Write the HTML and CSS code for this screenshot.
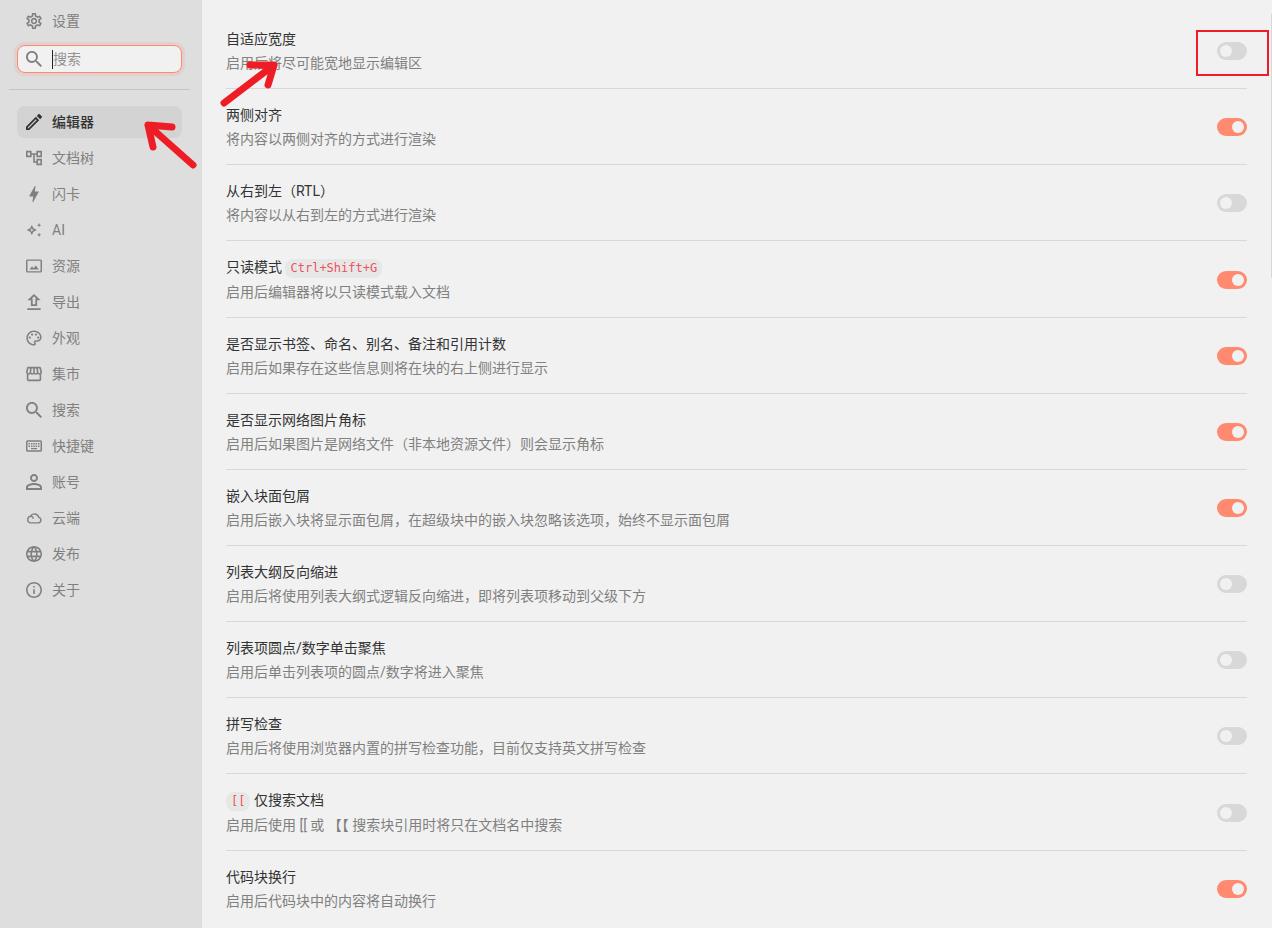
FILE: index.html
```html
<!DOCTYPE html>
<html lang="zh-CN">
<head>
    <meta charset="UTF-8">
    <meta name="viewport" content="width=device-width, initial-scale=1.0">
    <title>设置</title>
    <link rel="stylesheet" href="styles.css">
</head>
<body>
    <aside class="sidebar">
        <h1 class="title">
            <svg class="icon" viewBox="2 2 20 20"><path d="M19.43 12.98c.04-.32.07-.64.07-.98s-.03-.66-.07-.98l2.11-1.65c.19-.15.24-.42.12-.64l-2-3.46c-.09-.16-.26-.25-.44-.25-.06 0-.12.01-.17.03l-2.49 1c-.52-.4-1.08-.73-1.69-.98l-.38-2.65C14.46 2.18 14.25 2 14 2h-4c-.25 0-.46.18-.49.42l-.38 2.65c-.61.25-1.17.59-1.69.98l-2.49-1c-.06-.02-.12-.03-.18-.03-.17 0-.34.09-.43.25l-2 3.46c-.13.22-.07.49.12.64l2.11 1.65c-.04.32-.07.65-.07.98s.03.66.07.98l-2.11 1.65c-.19.15-.24.42-.12.64l2 3.46c.09.16.26.25.44.25.06 0 .12-.01.17-.03l2.49-1c.52.4 1.08.73 1.69.98l.38 2.65c.03.24.24.42.49.42h4c.25 0 .46-.18.49-.42l.38-2.65c.61-.25 1.17-.59 1.69-.98l2.49 1c.06.02.12.03.18.03.17 0 .34-.09.43-.25l2-3.46c.12-.22.07-.49-.12-.64l-2.11-1.65zm-1.98-1.71c.04.31.05.52.05.73s-.02.43-.05.73l-.14 1.13.89.7 1.08.84-.7 1.21-1.27-.51-1.04-.42-.9.68c-.43.32-.84.56-1.25.73l-1.06.43-.16 1.13-.2 1.35h-1.4l-.19-1.35-.16-1.13-1.06-.43c-.43-.18-.83-.41-1.23-.71l-.91-.7-1.06.43-1.27.51-.7-1.21 1.08-.84.89-.7-.14-1.13c-.03-.31-.05-.54-.05-.74s.02-.43.05-.73l.14-1.13-.89-.7-1.08-.84.7-1.21 1.27.51 1.04.42.9-.68c.43-.32.84-.56 1.25-.73l1.06-.43.16-1.13.2-1.35h1.39l.19 1.35.16 1.13 1.06.43c.43.18.83.41 1.23.71l.91.7 1.06-.43 1.27-.51.7 1.21-1.07.85-.89.7.14 1.13zM12 8c-2.21 0-4 1.79-4 4s1.79 4 4 4 4-1.79 4-4-1.79-4-4-4zm0 6c-1.1 0-2-.9-2-2s.9-2 2-2 2 .9 2 2-.9 2-2 2z"/></svg>
            设置
        </h1>
        <label class="search">
            <svg class="icon" viewBox="3 3 17.5 17.5"><path d="M15.5 14h-.79l-.28-.27C15.41 12.59 16 11.11 16 9.5 16 5.91 13.09 3 9.5 3S3 5.91 3 9.5 5.91 16 9.5 16c1.61 0 3.09-.59 4.23-1.57l.27.28v.79l5 4.99L20.49 19l-4.99-5zm-6 0C7.01 14 5 11.99 5 9.5S7.01 5 9.5 5 14 7.01 14 9.5 11.99 14 9.5 14z"/></svg>
            <input type="text" placeholder="搜索" aria-label="搜索">
        </label>
        <hr class="divider">
        <nav class="menu">
            <button class="item active">
                <svg class="icon" viewBox="3 3 18 18"><path d="M14.06 9.02l.92.92L5.92 19H5v-.92l9.06-9.06M17.66 3c-.25 0-.51.1-.7.29l-1.83 1.83 3.75 3.75 1.83-1.83c.39-.39.39-1.02 0-1.41l-2.34-2.34c-.2-.2-.45-.29-.71-.29zm-3.6 3.19L3 17.25V21h3.75L17.81 9.94l-3.75-3.75z"/></svg>
                编辑器
            </button>
            <button class="item">
                <svg class="icon" viewBox="2 2 20 20"><path d="M22 11V3h-7v3H9V3H2v8h7V8h2v10h4v3h7v-8h-7v3h-2V8h2v3h7zM7 9H4V5h3v4zm10 6h3v4h-3v-4zm0-10h3v4h-3V5z"/></svg>
                文档树
            </button>
            <button class="item">
                <svg class="icon" viewBox="2 2 20 20"><path d="M11 22h-1l1-7H7c-1.200 0-1-.6-.6-1.200L13 2h1l-1 7h4c.9 0 .8.600.5 1.200z"/></svg>
                闪卡
            </button>
            <button class="item">
                <svg class="icon" viewBox="1 1 22 22"><path d="M19 8.300l.9-2.100L22 5.300l-2.100-.9L19 2.300l-.9 2.100-2.100.9 2.100.9zM19 15.700l-.9 2.100-2.100.9 2.100.9.9 2.100.9-2.100 2.100-.9-2.100-.9zM11.300 9.700L9 5 6.700 9.700 2 12l4.700 2.300L9 19l2.300-4.700L16 12zm-1.500 3.100L9 14.700l-.8-1.900L6.300 12l1.900-.8.8-1.900.8 1.900 1.900.8z"/></svg>
                AI
            </button>
            <button class="item">
                <svg class="icon" viewBox="0 0 16 16"><path d="M1.500 1.500h13A1.500 1.500 0 0 1 16 3v10a1.500 1.500 0 0 1-1.500 1.500h-13A1.500 1.500 0 0 1 0 13V3a1.500 1.500 0 0 1 1.500-1.500zm0 1.300v10.400h13V2.800zM3.500 11.500l2.500-3.300 1.600 2L9.800 7.400l3 4.100z"/></svg>
                资源
            </button>
            <button class="item">
                <svg class="icon" viewBox="2.500 3 18 18"><path d="M11.500 3L4 10h4v6.500h7V10h4zM10 14.500V8h-1l2.500-2.300L14 8h-1v6.500zM4 19h15v2H4z"/></svg>
                导出
            </button>
            <button class="item">
                <svg class="icon" viewBox="1.500 1.500 21 21"><path d="M12 22C6.490 22 2 17.510 2 12S6.490 2 12 2s10 4.040 10 9c0 3.310-2.690 6-6 6h-1.770c-.28 0-.5.22-.5.5 0 .12.05.23.13.33.41.47.64 1.060.64 1.670A2.500 2.500 0 0 1 12 22zm0-18c-4.410 0-8 3.590-8 8s3.590 8 8 8c.28 0 .5-.22.5-.5a.54.54 0 0 0-.14-.35c-.41-.46-.63-1.050-.63-1.650a2.500 2.500 0 0 1 2.500-2.500H16c2.210 0 4-1.790 4-4 0-3.860-3.590-7-8-7z"/><circle cx="6.500" cy="11.500" r="1.500"/><circle cx="9.500" cy="7.500" r="1.500"/><circle cx="14.500" cy="7.500" r="1.500"/><circle cx="17.500" cy="11.500" r="1.500"/></svg>
                外观
            </button>
            <button class="item">
                <svg class="icon" viewBox="2 2 20 20"><path d="M21.900 8.890l-1.050-4.370c-.22-.9-1-1.520-1.910-1.520H5.050c-.9 0-1.690.63-1.900 1.520L2.100 8.890c-.24 1.020-.02 2.060.62 2.880.08.11.19.19.28.29V19c0 1.100.9 2 2 2h14c1.100 0 2-.9 2-2v-6.940c.09-.09.2-.18.28-.28.64-.82.87-1.870.62-2.890zM18.910 4.990l1.050 4.370c.1.42.01.84-.25 1.170-.14.18-.44.47-.94.47-.61 0-1.140-.49-1.210-1.140L16.980 5l1.930-.01zM13 5h1.960l.54 4.520c.05.39-.07.78-.33 1.070-.22.26-.54.41-.95.41-.67 0-1.220-.59-1.220-1.310V5zM8.490 9.520L9.040 5H11v4.690c0 .72-.55 1.310-1.290 1.310-.34 0-.65-.15-.89-.41a1.420 1.420 0 0 1-.33-1.070zm-4.450-.16L5.050 5h1.970l-.58 4.860c-.08.65-.6 1.140-1.210 1.140-.49 0-.8-.29-.93-.47-.27-.32-.36-.75-.26-1.170zM5 19v-6.030c.08.01.15.03.23.03.87 0 1.660-.36 2.240-.95.6.6 1.400.95 2.310.95.87 0 1.650-.36 2.230-.93.59.57 1.390.93 2.290.93.84 0 1.640-.35 2.240-.95.58.59 1.370.95 2.240.95.08 0 .15-.02.23-.03V19H5z"/></svg>
                集市
            </button>
            <button class="item">
                <svg class="icon" viewBox="3 3 17.5 17.5"><path d="M15.5 14h-.79l-.28-.27C15.41 12.59 16 11.11 16 9.5 16 5.91 13.09 3 9.5 3S3 5.91 3 9.5 5.91 16 9.5 16c1.61 0 3.09-.59 4.23-1.57l.27.28v.79l5 4.99L20.49 19l-4.99-5zm-6 0C7.01 14 5 11.99 5 9.5S7.01 5 9.5 5 14 7.01 14 9.5 11.99 14 9.5 14z"/></svg>
                搜索
            </button>
            <button class="item">
                <svg class="icon" viewBox="0 0 16 16"><path d="M1.500 2.300h13A1.500 1.500 0 0 1 16 3.800v8.400a1.500 1.500 0 0 1-1.500 1.500h-13A1.500 1.500 0 0 1 0 12.200V3.800a1.500 1.500 0 0 1 1.500-1.500zm0 1.400v8.600h13V3.700zM2.500 5H4v1.500H2.500zM5 5h1.500v1.500H5zM7.300 5h1.500v1.500H7.300zM9.600 5h1.500v1.500H9.600zM12 5h1.500v1.500H12zM2.500 7.500H4V9H2.500zM5 7.500h1.500V9H5zM7.300 7.500h1.500V9H7.300zM9.600 7.500h1.500V9H9.600zM12 7.500h1.500V9H12zM5 10h6v1.300H5z"/></svg>
                快捷键
            </button>
            <button class="item">
                <svg class="icon" viewBox="4 4 16 16"><path d="M12 5.900a2.100 2.100 0 1 1 0 4.200 2.100 2.100 0 0 1 0-4.200m0 9c2.970 0 6.100 1.460 6.100 2.100v1.100H5.900V17c0-.64 3.130-2.100 6.100-2.100M12 4C9.790 4 8 5.790 8 8s1.790 4 4 4 4-1.790 4-4-1.790-4-4-4zm0 9c-2.670 0-8 1.340-8 4v3h16v-3c0-2.660-5.330-4-8-4z"/></svg>
                账号
            </button>
            <button class="item">
                <svg class="icon" viewBox="0 0 16 16"><path class="line" d="M4 12.900h8.500a2.800 2.800 0 0 0 .3-5.500A4.500 4.500 0 0 0 4.500 6.200a3.500 3.500 0 0 0-.5 6.700zM4.500 6.200a2.300 2.300 0 0 1 2.600 2.500"/></svg>
                云端
            </button>
            <button class="item">
                <svg class="icon" viewBox="2 2 20 20"><path d="M11.990 2C6.470 2 2 6.480 2 12s4.470 10 9.990 10C17.520 22 22 17.520 22 12S17.520 2 11.990 2zm6.930 6h-2.950a15.650 15.650 0 0 0-1.380-3.560A8.030 8.030 0 0 1 18.920 8zM12 4.040c.83 1.200 1.480 2.530 1.910 3.960h-3.820c.43-1.430 1.080-2.760 1.910-3.960zM4.260 14C4.100 13.360 4 12.690 4 12s.1-1.360.26-2h3.380c-.08.66-.14 1.320-.14 2s.06 1.340.14 2H4.260zm.82 2h2.950c.32 1.250.78 2.450 1.380 3.560A7.990 7.990 0 0 1 5.080 16zm2.950-8H5.080a7.990 7.990 0 0 1 4.330-3.560A15.650 15.650 0 0 0 8.030 8zM12 19.960c-.83-1.200-1.480-2.530-1.910-3.960h3.820c-.43 1.430-1.080 2.760-1.910 3.960zM14.340 14H9.660c-.09-.66-.16-1.320-.16-2s.07-1.350.16-2h4.680c.09.65.16 1.320.16 2s-.07 1.340-.16 2zm.25 5.560c.6-1.110 1.060-2.310 1.380-3.560h2.950a8.030 8.030 0 0 1-4.330 3.560zM16.360 14c.08-.66.14-1.320.14-2s-.06-1.340-.14-2h3.380c.16.64.26 1.310.26 2s-.1 1.360-.26 2h-3.380z"/></svg>
                发布
            </button>
            <button class="item">
                <svg class="icon" viewBox="2 2 20 20"><path d="M11 7h2v2h-2zm0 4h2v6h-2zm1-9C6.480 2 2 6.480 2 12s4.480 10 10 10 10-4.480 10-10S17.520 2 12 2zm0 18c-4.410 0-8-3.590-8-8s3.590-8 8-8 8 3.590 8 8-3.590 8-8 8z"/></svg>
                关于
            </button>
        </nav>
    </aside>
    <main class="content">
        <label class="row">
            <span class="text">
                <span class="name">自适应宽度</span>
                <span class="desc">启用后将尽可能宽地显示编辑区</span>
            </span>
            <input class="switch" type="checkbox">
        </label>
        <label class="row">
            <span class="text">
                <span class="name">两侧对齐</span>
                <span class="desc">将内容以两侧对齐的方式进行渲染</span>
            </span>
            <input class="switch" type="checkbox" checked>
        </label>
        <label class="row">
            <span class="text">
                <span class="name">从右到左（RTL）</span>
                <span class="desc">将内容以从右到左的方式进行渲染</span>
            </span>
            <input class="switch" type="checkbox">
        </label>
        <label class="row">
            <span class="text">
                <span class="name">只读模式 <code>Ctrl+Shift+G</code></span>
                <span class="desc">启用后编辑器将以只读模式载入文档</span>
            </span>
            <input class="switch" type="checkbox" checked>
        </label>
        <label class="row">
            <span class="text">
                <span class="name">是否显示书签、命名、别名、备注和引用计数</span>
                <span class="desc">启用后如果存在这些信息则将在块的右上侧进行显示</span>
            </span>
            <input class="switch" type="checkbox" checked>
        </label>
        <label class="row">
            <span class="text">
                <span class="name">是否显示网络图片角标</span>
                <span class="desc">启用后如果图片是网络文件（非本地资源文件）则会显示角标</span>
            </span>
            <input class="switch" type="checkbox" checked>
        </label>
        <label class="row">
            <span class="text">
                <span class="name">嵌入块面包屑</span>
                <span class="desc">启用后嵌入块将显示面包屑，在超级块中的嵌入块忽略该选项，始终不显示面包屑</span>
            </span>
            <input class="switch" type="checkbox" checked>
        </label>
        <label class="row">
            <span class="text">
                <span class="name">列表大纲反向缩进</span>
                <span class="desc">启用后将使用列表大纲式逻辑反向缩进，即将列表项移动到父级下方</span>
            </span>
            <input class="switch" type="checkbox">
        </label>
        <label class="row">
            <span class="text">
                <span class="name">列表项圆点/数字单击聚焦</span>
                <span class="desc">启用后单击列表项的圆点/数字将进入聚焦</span>
            </span>
            <input class="switch" type="checkbox">
        </label>
        <label class="row">
            <span class="text">
                <span class="name">拼写检查</span>
                <span class="desc">启用后将使用浏览器内置的拼写检查功能，目前仅支持英文拼写检查</span>
            </span>
            <input class="switch" type="checkbox">
        </label>
        <label class="row">
            <span class="text">
                <span class="name"><code>[[</code> 仅搜索文档</span>
                <span class="desc">启用后使用 [[ 或 【【 搜索块引用时将只在文档名中搜索</span>
            </span>
            <input class="switch" type="checkbox">
        </label>
        <label class="row">
            <span class="text">
                <span class="name">代码块换行</span>
                <span class="desc">启用后代码块中的内容将自动换行</span>
            </span>
            <input class="switch" type="checkbox" checked>
        </label>
        <div class="scrollbar"></div>
    </main>
    <!-- red marks over the page -->
    <svg class="arrow arrow-menu" viewBox="0 0 54 50"><path d="M50 45L5 5l24 2M5 5l5 22"/></svg>
    <svg class="arrow arrow-row" viewBox="0 0 62 50"><path d="M5 44L55 6H31M55 6l-6 20"/></svg>
    <div class="frame"></div>
</body>
</html>
```
FILE: styles.css
```css
* {
    box-sizing: border-box;
}
body {
    margin: 0;
    display: flex;
    height: 100vh;
    overflow: hidden;
    position: relative;
    font-family: Roboto, "Noto Sans CJK SC", sans-serif;
    font-size: 14px;
    line-height: 20px;
    color: #333;
    background-color: #f1f1f1;
}
.sidebar {
    width: 202px;
    flex-shrink: 0;
    padding: 8px 12px 8px 9px;
    background-color: #dedede;
    color: #80807e;
}
.icon {
    width: 16px;
    height: 16px;
    flex-shrink: 0;
    fill: currentColor;
}
.icon .line {
    fill: none;
    stroke: currentColor;
    stroke-width: 1.4;
}
.title {
    display: flex;
    align-items: center;
    gap: 10px;
    margin: 0;
    padding: 3px 17px;
    font-size: 14px;
    font-weight: normal;
}
.search {
    display: flex;
    align-items: center;
    gap: 10px;
    height: 28px;
    margin: 11px 8px 0;
    padding: 0 8px;
    border: 1px solid #ff8a70;
    border-radius: 8px;
    background-color: #f1f1f1;
    box-shadow: 0 0 0 3px #e0d0ce;
}
.search input {
    flex: 1;
    min-width: 0;
    height: 19px;
    padding: 0;
    border: none;
    border-left: 1px solid #222;
    outline: none;
    background: none;
    font: inherit;
    color: #222;
}
.search input::placeholder {
    color: #929292;
}
.divider {
    margin: 16px 0;
    border: none;
    border-top: 1px solid #c4c4c4;
}
.menu {
    display: flex;
    flex-direction: column;
    gap: 4px;
    padding: 0 8px;
}
.item {
    display: flex;
    align-items: center;
    gap: 10px;
    height: 32px;
    padding: 0 9px;
    border: none;
    border-radius: 8px;
    background: none;
    font: inherit;
    color: inherit;
    cursor: pointer;
}
.item.active {
    background-color: #d3d3d3;
    color: #333;
    font-weight: 500;
}
.content {
    flex: 1;
    position: relative;
    padding: 13px 25px 0 24px;
    overflow: hidden;
}
.row {
    display: flex;
    align-items: center;
    gap: 16px;
    padding: 16px 0 15px;
    border-bottom: 1px solid #d8d8d8;
}
.row:last-of-type {
    border-bottom: none;
}
.text {
    flex: 1;
    display: flex;
    flex-direction: column;
    gap: 4px;
}
.desc {
    color: #80807e;
}
code {
    display: inline-block;
    padding: 0 5px;
    border-radius: 8px;
    background-color: #e6e8e7;
    color: #f05060;
    font-family: "DejaVu Sans Mono", monospace;
    font-size: 12px;
    line-height: 19px;
}
.switch {
    appearance: none;
    display: flex;
    align-items: center;
    width: 30px;
    height: 18px;
    margin: 0;
    padding: 0 3px;
    border-radius: 9px;
    background-color: #d8d8d8;
    cursor: pointer;
}
.switch::before {
    content: "";
    width: 12px;
    height: 12px;
    border-radius: 50%;
    background-color: #f1f1f1;
}
.switch:checked {
    justify-content: flex-end;
    background-color: #ff8a70;
}
.scrollbar {
    position: absolute;
    top: 14px;
    right: 0;
    width: 1px;
    height: 264px;
    background-color: #d8d8d8;
}
.arrow {
    position: absolute;
    fill: none;
    stroke: #ee1c25;
    stroke-width: 7;
    stroke-linecap: round;
    stroke-linejoin: round;
    pointer-events: none;
}
.arrow-menu {
    left: 143px;
    top: 120px;
    width: 54px;
    height: 50px;
}
.arrow-row {
    left: 219px;
    top: 59px;
    width: 62px;
    height: 50px;
}
.frame {
    position: absolute;
    top: 30px;
    right: 3px;
    width: 73px;
    height: 46px;
    border: 2px solid #ee1c25;
    pointer-events: none;
}
```
